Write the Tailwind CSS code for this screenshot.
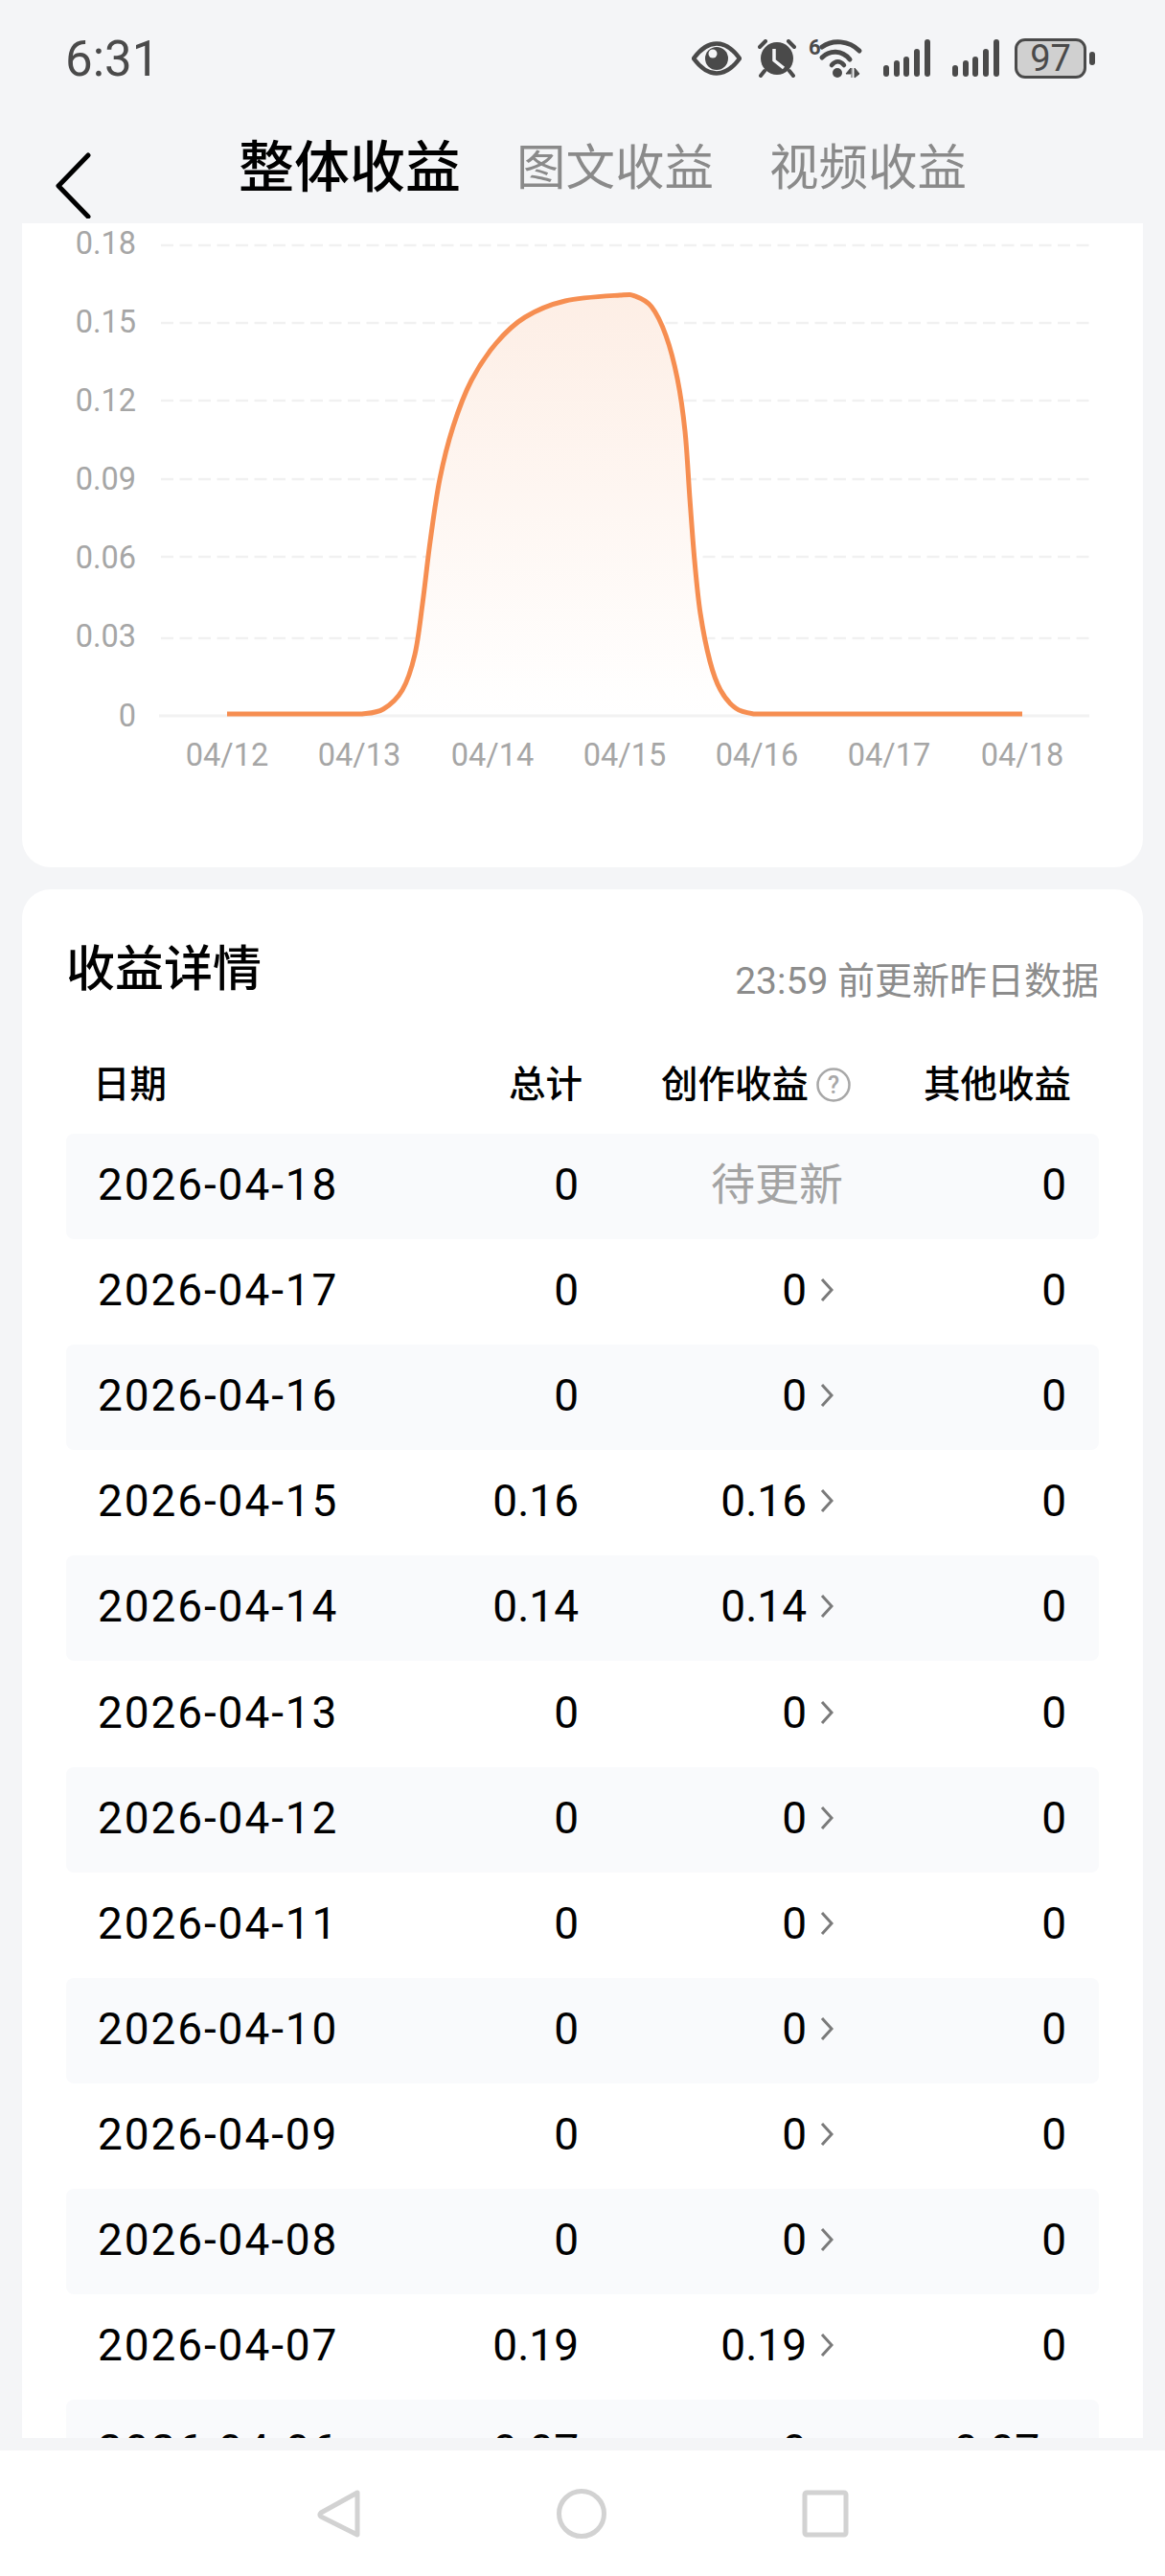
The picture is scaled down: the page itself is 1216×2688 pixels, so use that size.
<!DOCTYPE html>
<html lang="zh-CN">
<head>
  <meta charset="UTF-8" />
  <meta name="viewport" content="width=device-width, initial-scale=1" />
  <title>收益详情</title>
  <script src="https://cdn.jsdelivr.net/npm/@tailwindcss/browser@4"></script>
</head>
<body class="bg-[#f4f5f7] font-['Roboto','Noto_Sans_CJK_SC',sans-serif] text-black">
  <div class="w-[1216px] h-[2688px] flex flex-col overflow-hidden">

    <!-- Status bar -->
    <div class="h-[122px] shrink-0 flex items-center justify-between pl-[68px] pr-[73px]">
      <span class="text-[51px] leading-none text-[#4a4a4a]">6:31</span>
      <div class="flex items-center text-[#4a4a4a]">
        <svg width="52" height="36" viewBox="0 0 52 36" class="mr-[17px]">
          <path d="M2 18C10 7 18 2.500 26 2.500S42 7 50 18C42 29 34 33.500 26 33.500S10 29 2 18Z" fill="none" stroke="#4a4a4a" stroke-width="4.500" stroke-linejoin="round"/>
          <circle cx="26" cy="18" r="12" fill="#4a4a4a"/>
          <circle cx="22" cy="13" r="4.500" fill="#f4f5f7"/>
        </svg>
        <svg width="40" height="40" viewBox="0 0 40 40" class="mr-[13px]">
          <circle cx="20" cy="20" r="17" fill="#4a4a4a"/>
          <path d="M17 10V22L27 30" fill="none" stroke="#f4f5f7" stroke-width="3.500"/>
          <path d="M2 8 8 2M38 8 32 2M7 33 3 38M33 33 37 38" stroke="#4a4a4a" stroke-width="4" stroke-linecap="round"/>
        </svg>
        <svg width="56" height="42" viewBox="0 0 56 42" class="mr-[22px] overflow-visible">
          <text x="0" y="17" font-size="22" font-weight="700" fill="#4a4a4a">6</text>
          <path d="M14 9C25 1 42 2 53 13" fill="none" stroke="#4a4a4a" stroke-width="5" stroke-linecap="round"/>
          <path d="M14 20C22 12 35 12 43 22" fill="none" stroke="#4a4a4a" stroke-width="5" stroke-linecap="round"/>
          <path d="M24 28C28 23 33 23 37 28" fill="none" stroke="#4a4a4a" stroke-width="4.500" stroke-linecap="round"/>
          <circle cx="30" cy="36" r="5" fill="#4a4a4a"/>
          <path d="M44 31 39 37H44ZM45 31V41M48 31V41L53 37Z" fill="#4a4a4a" stroke="#4a4a4a" stroke-width="1"/>
        </svg>
        <svg width="49" height="40" viewBox="0 0 49 40" class="mr-[23px]" fill="#4a4a4a">
          <rect x="0" y="27" width="6" height="12" rx="3"/><rect x="11" y="22" width="6" height="17" rx="3"/><rect x="21" y="18" width="6" height="21" rx="3"/><rect x="32" y="10" width="6" height="29" rx="3"/><rect x="43" y="0" width="6" height="39" rx="3"/>
        </svg>
        <svg width="49" height="40" viewBox="0 0 49 40" class="mr-[16px]" fill="#4a4a4a">
          <rect x="0" y="27" width="6" height="12" rx="3"/><rect x="11" y="22" width="6" height="17" rx="3"/><rect x="21" y="18" width="6" height="21" rx="3"/><rect x="32" y="10" width="6" height="29" rx="3"/><rect x="43" y="0" width="6" height="39" rx="3"/>
        </svg>
        <div class="w-[75px] h-[42px] rounded-[11px] border-[3px] border-[#4a4a4a] bg-[#d0d0d0] flex items-center justify-center text-[38px] leading-none">97</div>
        <div class="w-[6px] h-[14px] rounded-[3px] bg-[#4a4a4a] ml-[3px]"></div>
      </div>
    </div>

    <!-- Header tabs -->
    <div class="h-[111px] shrink-0 flex items-center relative pl-[249px]">
      <svg width="40" height="70" viewBox="0 0 40 70" class="absolute left-[56px] top-[36px]">
        <path d="M36 4 5 36 36 68" fill="none" stroke="#000" stroke-width="5" stroke-linecap="round" stroke-linejoin="round"/>
      </svg>
      <span class="text-[58px] leading-none font-medium -mt-[6px]">整体收益</span>
      <span class="text-[51.500px] leading-none text-[#8a8a8a] ml-[58px] -mt-[4px]">图文收益</span>
      <span class="text-[51.500px] leading-none text-[#8a8a8a] ml-[58px] -mt-[4px]">视频收益</span>
    </div>

    <main class="h-[2311px] shrink-0 overflow-hidden px-[23px]">
      <!-- Chart card -->
      <section class="h-[672px] bg-white rounded-b-[30px]">
        <svg width="1170" height="672" viewBox="23 233 1170 672" class="block font-['Roboto',sans-serif]">
          <defs>
            <linearGradient id="area" x1="0" y1="0" x2="0" y2="1">
              <stop offset="0" stop-color="#fdeee5"/>
              <stop offset="1" stop-color="#ffffff"/>
            </linearGradient>
          </defs>
          <g stroke="#f1f1f1" stroke-width="2.500" stroke-dasharray="13 6.500">
            <line x1="168" y1="256" x2="1137" y2="256"/>
            <line x1="168" y1="337" x2="1137" y2="337"/>
            <line x1="168" y1="418" x2="1137" y2="418"/>
            <line x1="168" y1="500" x2="1137" y2="500"/>
            <line x1="168" y1="581" x2="1137" y2="581"/>
            <line x1="168" y1="666" x2="1137" y2="666"/>
          </g>
          <line x1="166" y1="747" x2="1137" y2="747" stroke="#f2f2f2" stroke-width="3"/>
          <g fill="#a6a6a6" font-size="32.500" text-anchor="end">
            <text x="142" y="265">0.18</text>
            <text x="142" y="347">0.15</text>
            <text x="142" y="429">0.12</text>
            <text x="142" y="511">0.09</text>
            <text x="142" y="593">0.06</text>
            <text x="142" y="675">0.03</text>
            <text x="142" y="758">0</text>
          </g>
          <g fill="#a6a6a6" font-size="32.500" text-anchor="middle">
            <text x="237" y="799">04/12</text>
            <text x="375" y="799">04/13</text>
            <text x="514" y="799">04/14</text>
            <text x="652" y="799">04/15</text>
            <text x="790" y="799">04/16</text>
            <text x="928" y="799">04/17</text>
            <text x="1067" y="799">04/18</text>
          </g>
          <path id="area-path" fill="url(#area)"/>
          <path id="line-path" fill="none" stroke="#f68e51" stroke-width="5"/>
        </svg>
      </section>

      <!-- Detail table card -->
      <section class="mt-[23px] bg-white rounded-t-[30px] px-[46px] min-h-[1700px]">
        <div class="flex items-end justify-between pt-[56px]">
          <h2 class="text-[51px] leading-[56px] font-medium">收益详情</h2>
          <span class="text-[39px] leading-[44px] text-[#8c8c8c] -mb-[6px]">23:59 前更新昨日数据</span>
        </div>
        <div class="flex items-center h-[50px] mt-[67px] text-[38.500px] leading-none font-medium whitespace-nowrap">
          <span class="w-[461px] pl-[28px]">日期</span>
          <span class="w-[78px] text-right">总计</span>
          <span class="ml-[82px]">创作收益</span>
          <svg width="36" height="36" viewBox="0 0 36 36" class="ml-[8px]">
            <circle cx="18" cy="18" r="16.500" fill="none" stroke="#a8a8a8" stroke-width="2.500"/>
            <text x="18" y="27" text-anchor="middle" font-size="25" fill="#a8a8a8">?</text>
          </svg>
          <span class="ml-[76px]">其他收益</span>
        </div>
        <div id="rows" class="mt-[26px]"></div>
      </section>
    </main>

    <!-- Navigation bar -->
    <nav class="mt-[13px] flex-1 bg-white relative">
      <svg width="1216" height="131" viewBox="0 2557 1216 131" class="block">
        <path d="M373 2601 335 2622Q333 2624 335 2626L373 2645Z" fill="none" stroke="#d2d2d2" stroke-width="5" stroke-linejoin="round"/>
        <circle cx="607" cy="2623" r="23.500" fill="none" stroke="#d2d2d2" stroke-width="5"/>
        <rect x="840" y="2601" width="43" height="44" rx="2" fill="none" stroke="#d2d2d2" stroke-width="5"/>
      </svg>
    </nav>
  </div>

  <script>
    // curve points read off the chart, smoothed with catmull-rom
    const pts = [[360,745],[378,745],[400,740],[420,720],[433,683],[441,630],[449,565],[459,500],[473,445],[492,397],[518,358],[548,331],[590,314],[647,308],[663,309],[680,320],[695,350],[707,395],[715,450],[720,520],[725,585],[731,640],[741,690],[752,720],[768,739],[787,745],[805,745]];
    let curve = 'M378 745';
    for (let i = 1; i < pts.length - 2; i++) {
      const [p0, p1, p2, p3] = [pts[i - 1], pts[i], pts[i + 1], pts[i + 2]];
      curve += 'C' + (p1[0] + (p2[0] - p0[0]) / 6) + ' ' + (p1[1] + (p2[1] - p0[1]) / 6) + ' ' +
        (p2[0] - (p3[0] - p1[0]) / 6) + ' ' + (p2[1] - (p3[1] - p1[1]) / 6) + ' ' + p2[0] + ' ' + p2[1];
    }
    document.getElementById('area-path').setAttribute('d', curve + 'Z');
    document.getElementById('line-path').setAttribute('d', 'M237 745H378' + curve.slice(8) + 'H1067');

    // date, total, creation income, other income
    const rows = [
      ['2026-04-18', '0', null, '0'],
      ['2026-04-17', '0', '0', '0'],
      ['2026-04-16', '0', '0', '0'],
      ['2026-04-15', '0.16', '0.16', '0'],
      ['2026-04-14', '0.14', '0.14', '0'],
      ['2026-04-13', '0', '0', '0'],
      ['2026-04-12', '0', '0', '0'],
      ['2026-04-11', '0', '0', '0'],
      ['2026-04-10', '0', '0', '0'],
      ['2026-04-09', '0', '0', '0'],
      ['2026-04-08', '0', '0', '0'],
      ['2026-04-07', '0.19', '0.19', '0'],
      ['2026-04-06', '0.07', '0', '0.07']
    ];
    const chevron = '<svg width="14" height="26" viewBox="0 0 14 26" class="ml-[14px]"><path d="M2 2 12 13 2 24" fill="none" stroke="#7a7a7a" stroke-width="3"/></svg>';

    document.getElementById('rows').innerHTML = rows.map(function(r, i) {
      const bg = i % 2 === 0 ? 'bg-[#f9fafc]' : 'bg-white';
      const mid = r[2] === null
        ? '<span class="text-[#a3a3a3]">待更新</span>'
        : '<span>' + r[2] + '</span>' + chevron + '<span class="w-[10px]"></span>';
      const other = r[3] === '0'
        ? '<span>0</span>'
        : '<span>' + r[3] + '</span>' + chevron;
      return '<div class="h-[110.100px] pb-[4px] flex items-center rounded-[8px] text-[46px] leading-none ' + bg + '">' +
        '<span class="w-[400px] pl-[33px] tracking-[1.900px]">' + r[0] + '</span>' +
        '<span class="w-[135px] text-right">' + r[1] + '</span>' +
        '<span class="w-[276px] flex items-center justify-end">' + mid + '</span>' +
        '<span class="w-[233px] flex items-center justify-end">' + other + '</span>' +
        '</div>';
    }).join('');
  </script>
</body>
</html>
